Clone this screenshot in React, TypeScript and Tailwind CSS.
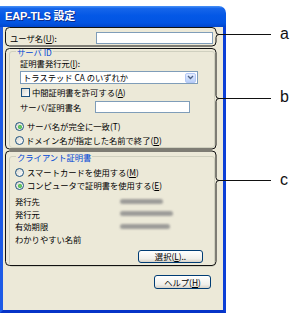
import React from "react";

function U({ c }: { c: string }) {
  return <span className="underline underline-offset-[1px]">{c}</span>;
}

function Radio({ checked }: { checked?: boolean }) {
  return (
    <span className="w-[9px] h-[9px] shrink-0 rounded-full border border-[#1c5180] bg-[linear-gradient(135deg,#d8d7cf,#ffffff)] flex items-center justify-center">
      {checked && <span className="w-[4px] h-[4px] rounded-full bg-[radial-gradient(circle,#7ee07e,#179317)]" />}
    </span>
  );
}

function Blur({ w }: { w: number }) {
  return (
    <div className="flex items-center gap-[1px] opacity-80" style={{ width: w }}>
      <div className="h-[5px] flex-1 rounded-full bg-[#8a8a8a] blur-[1.2px]" />
    </div>
  );
}

function bracket(x0: number, x1: number, y0: number, y1: number, t: number) {
  const r = 4;
  return `M ${x0 + r} ${y0} H ${x1 - r} Q ${x1} ${y0} ${x1} ${y0 + r} V ${t - 3} Q ${x1} ${t} ${x1 + 3} ${t} Q ${x1} ${t} ${x1} ${t + 3} V ${y1 - r} Q ${x1} ${y1} ${x1 - r} ${y1} H ${x0 + r} Q ${x0} ${y1} ${x0} ${y1 - r} V ${y0 + r} Q ${x0} ${y0} ${x0 + r} ${y0} Z`;
}

export default function App() {
  return (
    <div className="relative w-[294px] h-[318px] bg-white overflow-hidden font-['Noto_Sans_CJK_JP',sans-serif] text-[8.3px] text-black">
      <div className="ml-0 mt-[6px] w-[226px] h-[307px] flex flex-col">
        {/* title bar */}
        <div className="h-[21px] rounded-tr-[7px] bg-[linear-gradient(to_bottom,#4a93f7_0%,#1665ea_12%,#0458e6_45%,#0254e2_80%,#0046cc_100%)] flex items-center pl-[5px]">
          <span className="text-white font-bold text-[11px] leading-none tracking-[-0.2px] font-['Liberation_Sans','Noto_Sans_CJK_JP',sans-serif] [text-shadow:1px_1px_0_#0a2a8a]">
            EAP-TLS 設定
          </span>
        </div>
        {/* body */}
        <div className="flex-1 border-l-[3px] border-r-[3px] border-b-[3px] border-l-[#1d5be6] border-r-[#0b3fd6] border-b-[#0634c8] bg-[#ece9d8] flex flex-col">
          {/* user name row */}
          <div className="mt-[5px] flex items-center h-[12px] pl-[7px]">
            <span className="w-[86px] leading-[12px]">
              ユーザ名(<U c="U" />):
            </span>
            <div className="w-[117px] h-[12px] bg-white border border-[#7f9db9]" />
          </div>

          {/* server ID group */}
          <div className="mt-[7px] ml-[6px] w-[206px] border border-[#d0d0bf] rounded-[3px] flex flex-col pb-[1px]">
            <span className="-mt-[5px] ml-[6px] w-fit px-[1px] bg-[#ece9d8] leading-[10px] text-[#0046d5]">サーバ ID</span>
            <div className="pl-[10px] flex flex-col">
              <span className="mt-[1px] leading-[11px]">
                証明書発行元(<U c="I" />):
              </span>
              <div className="mt-[2px] w-[178px] h-[13px] bg-white border border-[#7f9db9] flex items-center justify-between pl-[2px] pr-[1px]">
                <span className="leading-[11px]">トラステッド CA のいずれか</span>
                <span className="w-[11px] h-[10px] rounded-[2px] border border-[#b4c8f6] bg-[linear-gradient(to_bottom,#e6eeff,#b9cff8)] flex items-center justify-center">
                  <svg width="7" height="5" viewBox="0 0 7 5">
                    <path d="M1 1 L3.5 3.5 L6 1" stroke="#4d6185" strokeWidth="1.3" fill="none" />
                  </svg>
                </span>
              </div>
              <div className="mt-[3px] h-[11px] flex items-center pl-[1px]">
                <span className="w-[9px] h-[9px] shrink-0 border border-[#1c5180] bg-[linear-gradient(135deg,#d8d7cf,#ffffff)]" />
                <span className="ml-[2px] leading-[11px]">
                  中間証明書を許可する(<U c="A" />)
                </span>
              </div>
              <div className="mt-[3px] h-[12px] flex items-center">
                <span className="w-[75px] leading-[12px]">サーバ/証明書名</span>
                <div className="w-[95px] h-[12px] bg-white border border-[#7f9db9]" />
              </div>
            </div>
            <div className="pl-[5px] flex flex-col">
              <div className="mt-[8px] h-[11px] flex items-center">
                <Radio checked />
                <span className="ml-[3px] leading-[11px]">サーバ名が完全に一致(T)</span>
              </div>
              <div className="mt-[3px] h-[11px] flex items-center">
                <Radio />
                <span className="ml-[2px] leading-[11px]">
                  ドメイン名が指定した名前で終了(<U c="D" />)
                </span>
              </div>
            </div>
          </div>

          {/* client cert group */}
          <div className="mt-[8px] ml-[6px] w-[206px] border border-[#d0d0bf] rounded-[3px] flex flex-col pb-[3px]">
            <span className="-mt-[5px] ml-[6px] w-fit px-[1px] bg-[#ece9d8] leading-[10px] text-[#0046d5]">クライアント証明書</span>
            <div className="pl-[5px] flex flex-col">
              <div className="mt-[5px] h-[11px] flex items-center">
                <Radio />
                <span className="ml-[3px] leading-[11px]">
                  スマートカードを使用する(<U c="M" />)
                </span>
              </div>
              <div className="mt-[2px] h-[11px] flex items-center">
                <Radio checked />
                <span className="ml-[3px] leading-[11px]">
                  コンピュータで証明書を使用する(<U c="E" />)
                </span>
              </div>
              <div className="mt-[4px] flex flex-col">
                <div className="h-[12.5px] flex items-center">
                  <span className="w-[105px] leading-[12px]">発行先</span>
                  <Blur w={43} />
                </div>
                <div className="h-[12.5px] flex items-center">
                  <span className="w-[105px] leading-[12px]">発行元</span>
                  <Blur w={53} />
                </div>
                <div className="h-[12.5px] flex items-center">
                  <span className="w-[105px] leading-[12px]">有効期限</span>
                  <Blur w={50} />
                </div>
                <div className="h-[12.5px] flex items-center">
                  <span className="leading-[12px]">わかりやすい名前</span>
                </div>
              </div>
            </div>
            <div className="mt-[5px] self-end mr-[11px] w-[65px] h-[13px] rounded-[3px] border border-[#003c74] bg-[linear-gradient(to_bottom,#ffffff,#f0efea_70%,#d8d3c8)] flex items-center justify-center">
              <span className="leading-[11px]">
                選択(<U c="L" />)..
              </span>
            </div>
          </div>

          <div className="mt-[8px] self-end mr-[12px] w-[57px] h-[14px] rounded-[3px] border border-[#003c74] bg-[linear-gradient(to_bottom,#ffffff,#f0efea_70%,#d8d3c8)] flex items-center justify-center">
            <span className="leading-[11px]">
              ヘルプ(<U c="H" />)
            </span>
          </div>
        </div>
      </div>

      {/* callout overlay */}
      <svg className="absolute inset-0 pointer-events-none" width="294" height="318" viewBox="0 0 294 318">
        <g fill="none" stroke="#111" strokeWidth="1">
          <path d={bracket(5.5, 216, 27.5, 46, 34.5)} />
          <path d={bracket(5.5, 216, 48.5, 149, 98.5)} />
          <path d={bracket(5.5, 216, 151, 265.5, 180.5)} />
          <path d="M219 34.5 H271" />
          <path d="M219 98.5 H271" />
          <path d="M219 180.5 H271" />
        </g>
      </svg>
      <span className="absolute left-[280px] top-[24px] text-[16px] leading-[20px] text-[#111] font-['Liberation_Sans',sans-serif]">a</span>
      <span className="absolute left-[280px] top-[87px] text-[16px] leading-[20px] text-[#111] font-['Liberation_Sans',sans-serif]">b</span>
      <span className="absolute left-[280px] top-[170px] text-[16px] leading-[20px] text-[#111] font-['Liberation_Sans',sans-serif]">c</span>
    </div>
  );
}
